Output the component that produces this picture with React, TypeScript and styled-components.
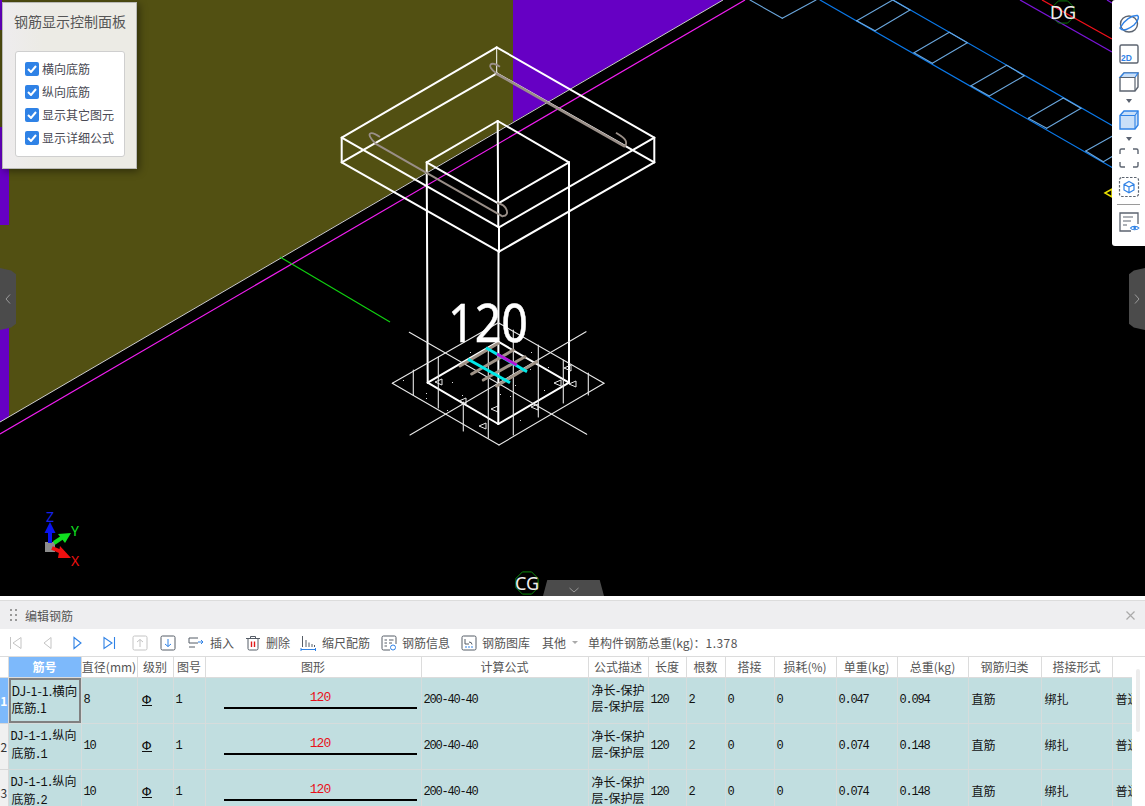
import React from 'react';
import styled, { createGlobalStyle } from 'styled-components';

const CJK = '"Noto Sans CJK SC", "Noto Sans", sans-serif';
const MONO = '"Liberation Mono", "Noto Sans CJK SC", monospace';

const GlobalStyle = createGlobalStyle`
  html, body { margin: 0; padding: 0; background: #fff; overflow: hidden; }
  * { box-sizing: border-box; }
`;

/* ---------- page ---------- */

const Page = styled.div`
  width: 1145px;
  height: 806px;
  display: flex;
  flex-direction: column;
  overflow: hidden;
  font-family: ${CJK};
`;

const Viewport = styled.div`
  position: relative;
  height: 596px;
  flex: none;
  background: #000;
  overflow: hidden;
`;

const Scene = styled.svg`
  display: block;
  width: 1145px;
  height: 596px;
`;

/* ---------- floating control panel ---------- */

const ControlPanel = styled.div`
  position: absolute;
  left: 2px;
  top: 2px;
  width: 135px;
  height: 167px;
  padding: 8px 11px 0 12px;
  background: linear-gradient(90deg, #eeecee 0%, #ecebe5 30%, #ecebe5 100%);
  border: 1px solid #b9b9b6;
  box-shadow: 2px 2px 8px rgba(0, 0, 0, 0.45);
`;

const PanelTitle = styled.div`
  font-size: 14px;
  line-height: 20px;
  color: #555;
  white-space: nowrap;
  margin-left: -1px;
`;

const OptionBox = styled.div`
  margin-top: 20px;
  width: 110px;
  height: 106px;
  padding: 10px 0 0 9px;
  background: #fff;
  border: 1px solid #cfcfcf;
  border-radius: 3px;
  display: flex;
  flex-direction: column;
  gap: 9px;
`;

const OptionRow = styled.label`
  display: flex;
  align-items: center;
  gap: 3px;
  height: 14px;
  font-size: 12px;
  line-height: 14px;
  color: #4a4a55;
  white-space: nowrap;
`;

const CheckMark = styled.span`
  width: 14px;
  height: 14px;
  border-radius: 2px;
  background: #2f82e6;
  display: flex;
  align-items: center;
  justify-content: center;
`;

/* ---------- right tools ---------- */

const ViewTools = styled.div`
  position: absolute;
  right: 0;
  top: 0;
  width: 33px;
  height: 246px;
  background: #fff;
  border-radius: 3px 0 0 3px;
  display: flex;
  flex-direction: column;
  align-items: center;
  padding-top: 13px;
`;

const ViewIcon = styled.svg<{ $gap?: number }>`
  display: block;
  width: 22px;
  height: 22px;
  flex: none;
  margin-bottom: ${p => p.$gap ?? 0}px;
`;

const DropArrow = styled.div`
  width: 0;
  height: 0;
  border-left: 3.5px solid transparent;
  border-right: 3.5px solid transparent;
  border-top: 4px solid #5a6270;
  margin: 6px 0 6px;
`;

const ToolDivider = styled.div`
  width: 23px;
  height: 1px;
  background: #9a9a9a;
  margin: 6px 0 6px;
`;

/* ---------- collapse handles ---------- */

const SideHandle = styled.div<{ $side: 'left' | 'right' }>`
  position: absolute;
  top: 268px;
  ${p => p.$side}: 0;
  width: 16px;
  height: 62px;
  background: #4b4b4b;
  clip-path: ${p =>
    p.$side === 'left'
      ? 'polygon(0 0, 70% 4%, 100% 10%, 100% 90%, 70% 96%, 0 100%)'
      : 'polygon(100% 0, 30% 4%, 0 10%, 0 90%, 30% 96%, 100% 100%)'};
  display: flex;
  align-items: center;
  justify-content: center;
  color: #9a9a9a;
`;

const BottomHandle = styled.div`
  position: absolute;
  left: 543px;
  bottom: 0;
  width: 61px;
  height: 16px;
  background: #4b4b4b;
  clip-path: polygon(7% 0, 93% 0, 100% 100%, 0 100%);
  display: flex;
  align-items: center;
  justify-content: center;
  color: #9a9a9a;
  padding-top: 3px;
`;

/* ---------- bottom panel ---------- */

const EditorPanel = styled.div`
  flex: 1;
  min-height: 0;
  display: flex;
  flex-direction: column;
  padding-top: 4px;
  background: #fff;
`;

const TitleBar = styled.div`
  height: 29px;
  flex: none;
  display: flex;
  align-items: center;
  padding: 0 10px 0 10px;
  background: #eeeef0;
  border-top: 1px solid #dcdcdc;
  font-size: 12px;
  color: #555;
`;

const Grip = styled.div`
  width: 7px;
  display: grid;
  grid-template-columns: 2px 2px;
  gap: 3px 3px;
  margin-right: 8px;
  i {
    width: 2px;
    height: 2px;
    background: #999;
  }
`;

const CloseButton = styled.div`
  margin-left: auto;
  color: #aaa;
  display: flex;
`;

const Toolbar = styled.div`
  height: 27px;
  flex: none;
  display: flex;
  align-items: center;
  padding-left: 8px;
  font-size: 12px;
  color: #555;
  white-space: nowrap;
`;

const ToolIcon = styled.svg<{ $left: number }>`
  display: block;
  width: 16px;
  height: 16px;
  flex: none;
  margin-left: ${p => p.$left}px;
`;

const ToolLabel = styled.span<{ $left?: number }>`
  margin-left: ${p => p.$left ?? 5}px;
`;

const SmallCaret = styled.span`
  width: 0;
  height: 0;
  margin-left: 6px;
  border-left: 3px solid transparent;
  border-right: 3px solid transparent;
  border-top: 3px solid #aaa;
`;

const TotalValue = styled.span`
  letter-spacing: 0.5px;
`;

const TableArea = styled.div`
  flex: 1;
  min-height: 0;
  display: flex;
  border-top: 1px solid #dcdcdc;
`;

const TableClip = styled.div`
  width: 1132px;
  flex: none;
  overflow: hidden;
`;

const ScrollTrack = styled.div`
  flex: 1;
  padding: 12px 0 0 4px;
`;

const ScrollThumb = styled.div`
  width: 4px;
  height: 63px;
  background: #ececec;
  border-radius: 2px;
`;

const Grid = styled.table`
  width: 1232px;
  table-layout: fixed;
  border-collapse: collapse;
`;

const HeadCell = styled.th<{ $active?: boolean }>`
  height: 20px;
  padding: 0;
  font-size: 12px;
  font-weight: ${p => (p.$active ? 700 : 400)};
  line-height: 14px;
  color: ${p => (p.$active ? '#fff' : '#555')};
  background: ${p => (p.$active ? '#7db9fb' : '#fff')};
  border-right: 1px solid #dcdcdc;
  border-bottom: 1px solid #dcdcdc;
  text-align: center;
  white-space: nowrap;
  overflow: hidden;
`;

const BlankHead = styled.th`
  height: 20px;
  padding: 0;
  background: #fff;
  border-bottom: 1px solid #dcdcdc;
`;

const RowHead = styled.td<{ $active?: boolean }>`
  padding: 0;
  height: 46px;
  font-size: 12px;
  text-align: center;
  font-weight: ${p => (p.$active ? 700 : 400)};
  color: ${p => (p.$active ? '#fff' : '#333')};
  background: ${p => (p.$active ? '#7db9fb' : '#f0f0f0')};
  border-right: 1px solid #d8d8d8;
  border-bottom: 1px solid #d8d8d8;
`;

const Cell = styled.td`
  padding: 0 0 2px 3px;
  height: 46px;
  font-size: 12px;
  line-height: 14px;
  color: #111;
  background: #c1dee0;
  border-right: 1px solid #d6dcdc;
  border-bottom: 1px solid #d6dcdc;
  white-space: nowrap;
  overflow: hidden;
`;

const CodeCell = styled(Cell)<{ $active?: boolean }>`
  line-height: ${p => (p.$active ? 17 : 15)}px;
  font-size: ${p => (p.$active ? 12.5 : 12)}px;
  box-shadow: ${p => (p.$active ? 'inset 0 0 0 2px #808080' : 'none')};
`;

const Mono = styled.span`
  font-family: ${MONO};
  letter-spacing: -1.2px;
  margin-left: -1px;
`;

const TextLine = styled.span`
  display: block;
`;

const GradeMark = styled.span`
  display: inline-block;
  margin-left: 1px;
  font-family: "DejaVu Sans", sans-serif;
  font-size: 13px;
  line-height: 11px;
  border-bottom: 1px solid #111;
`;

const ShapeCell = styled(Cell)`
  padding: 0 0 0 18px;
`;

const ShapeLength = styled.div`
  width: 193px;
  text-align: center;
  color: #e8101a;
  font-family: ${MONO};
  font-size: 13px;
  letter-spacing: -1px;
`;

const ShapeBar = styled.div`
  width: 193px;
  height: 2px;
  margin-top: 2px;
  background: #000;
`;

/* ---------- data ---------- */

const columns = [
  { title: '', width: 8 },
  { title: '筋号', width: 73 },
  { title: '直径(mm)', width: 56 },
  { title: '级别', width: 36 },
  { title: '图号', width: 32 },
  { title: '图形', width: 216 },
  { title: '计算公式', width: 167 },
  { title: '公式描述', width: 60 },
  { title: '长度', width: 38 },
  { title: '根数', width: 39 },
  { title: '搭接', width: 49 },
  { title: '损耗(%)', width: 62 },
  { title: '单重(kg)', width: 61 },
  { title: '总重(kg)', width: 71 },
  { title: '钢筋归类', width: 73 },
  { title: '搭接形式', width: 71 },
  { title: '', width: 120 },
];

const rows = [
  { no: 1, prefix: 'DJ-1-1.', part: '横向', tail: '.1', dia: 8, single: '0.047', total: '0.094' },
  { no: 2, prefix: 'DJ-1-1.', part: '纵向', tail: '.1', dia: 10, single: '0.074', total: '0.148' },
  { no: 3, prefix: 'DJ-1-1.', part: '纵向', tail: '.2', dia: 10, single: '0.074', total: '0.148' },
];

const options = ['横向底筋', '纵向底筋', '显示其它图元', '显示详细公式'];

type Seg = [number, number, number, number];

const footing: Seg[] = [
  [496.7, 47.3, 654.3, 137.7], [654.3, 137.7, 499, 227.3], [499, 227.3, 341.7, 137.7], [341.7, 137.7, 496.7, 47.3],
  [496.7, 73.3, 654.3, 162.3], [654.3, 162.3, 499, 251.7], [499, 251.7, 341.7, 162.3], [341.7, 162.3, 496.7, 73.3],
  [341.7, 137.7, 341.7, 162.3], [654.3, 137.7, 654.3, 162.3], [499, 227.3, 499, 251.7],
  [497.7, 121, 569, 162.3], [569, 162.3, 498.3, 203.3], [498.3, 203.3, 426.7, 162.3], [426.7, 162.3, 497.7, 121],
  [497.7, 121, 498.3, 227], [426.7, 162.3, 427.7, 382.7], [569, 162.3, 569, 382.7], [498.5, 251.7, 498.3, 424],
  [427.7, 382.7, 498.3, 424], [498.3, 424, 569, 382.7], [569, 382.7, 498.3, 341.7], [498.3, 341.7, 427.7, 382.7],
];

const plate: Seg[] = [
  [392.3, 383.3, 498.3, 322.7], [498.3, 322.7, 604, 383.3], [604, 383.3, 499, 445], [499, 445, 392.3, 383.3],
  [409.3, 332.3, 586.7, 434.3], [586, 331.7, 410, 435],
  [413.3, 370, 413.3, 395], [438.3, 357, 438.3, 408], [463.3, 402, 463.3, 431], [488.3, 349, 488.3, 438],
  [513.3, 330, 513.3, 435], [538.3, 345, 538.3, 417], [563.3, 360, 563.3, 403], [588.3, 373, 588.3, 395],
];

const blueLines: Seg[] = [[820, 0, 1113, 168], [893, 0, 1113, 126]];
const paleLines: Seg[] = [
  [750, 0, 782.3, 18.3], [782.3, 18.3, 816, 0],
  [856.7, 20.7, 892.7, 0], [875, 30.7, 910, 10],
  [914, 52.7, 949.3, 32.3], [932.3, 63.3, 967.3, 42.7],
  [971, 85.7, 1006.7, 65.3], [989.3, 96, 1024.3, 75.7],
  [1028.3, 118.3, 1063.3, 98], [1046.7, 128.3, 1081, 108.3],
  [1085.7, 151, 1113, 135.7], [1103.3, 161.7, 1113, 156],
  [892.7, 0, 910, 10], [949.3, 32.3, 967.3, 42.7], [1006.7, 65.3, 1024.3, 75.7], [1063.3, 98, 1081, 108.3],
  [856.7, 20.7, 875, 30.7], [914, 52.7, 932.3, 63.3], [971, 85.7, 989.3, 96], [1028.3, 118.3, 1046.7, 128.3], [1085.7, 151, 1103.3, 161.7],
];

const rebarGrey: Seg[] = [
  [460, 366, 498.3, 343.3], [471.7, 374, 513.3, 350], [483.3, 380, 525, 356.7], [496.7, 386, 536.7, 361.7],
];

const triangles: [number, number][] = [
  [439, 382], [463, 401], [495, 409], [535, 407], [483, 426], [558, 383], [573, 384], [568, 368],
];

const specks: [number, number][] = [
  [403, 380], [452, 382], [426, 393], [447, 410], [500, 394], [510, 396], [530, 369], [548, 367],
  [462, 395], [520, 420], [544, 390], [470, 352], [531, 352], [426, 398], [481, 414], [515, 385],
];

const hexagon = (cx: number, cy: number, r: number) =>
  Array.from({ length: 8 }, (_, i) => {
    const a = (Math.PI / 4) * i + Math.PI / 8;
    return `${cx + r * Math.cos(a)},${cy + r * Math.sin(a)}`;
  }).join(' ');

const Lines = ({ items, color, width }: { items: Seg[]; color: string; width: number }) => (
  <g stroke={color} strokeWidth={width} fill="none" strokeLinecap="round">
    {items.map((s, i) => (
      <line key={i} x1={s[0]} y1={s[1]} x2={s[2]} y2={s[3]} />
    ))}
  </g>
);

const CadScene = () => (
  <Scene viewBox="0 0 1145 596">
    {/* slabs behind the column */}
    <polygon points="0,0 513,0 513,122 0,422" fill="#525012" />
    <polygon points="513,0 723,0 513,122" fill="#6600c4" />
    <rect x="0" y="0" width="2" height="30" fill="#6600c4" />
    <rect x="0" y="127" width="9" height="98" fill="#6600c4" />
    <polygon points="0,327 9,327 9,417 0,422" fill="#6600c4" />
    <line x1="0" y1="422" x2="723" y2="0" stroke="#cfcfcf" strokeWidth="1" />
    <line x1="0" y1="434" x2="745" y2="0" stroke="#f01ef0" strokeWidth="1.2" />
    <line x1="280" y1="257" x2="390" y2="322" stroke="#10d010" strokeWidth="1.2" />

    {/* top right axis and stair */}
    <Lines items={blueLines} color="#0a78e8" width={1.2} />
    <Lines items={paleLines} color="#6aa6dc" width={1.1} />
    <line x1="1042" y1="0" x2="1112" y2="39" stroke="#f0101a" strokeWidth="1.3" />
    <line x1="1020" y1="0" x2="1112" y2="52" stroke="#7a14d8" strokeWidth="1.3" />
    <line x1="1107" y1="0" x2="1112" y2="3" stroke="#7a14d8" strokeWidth="1.3" />
    <polygon points={hexagon(1063, 12, 12)} fill="none" stroke="#0a7a0a" strokeWidth="1" />
    <text x="1063" y="18.5" textAnchor="middle" fontSize="18" fill="#eee" fontFamily="Noto Sans, sans-serif">DG</text>
    <polygon points="1105,193 1112,189 1112,197" fill="none" stroke="#e8e000" strokeWidth="1.5" />

    {/* footing wireframe */}
    <Lines items={footing} color="#fff" width={2} />
    <line x1="496.7" y1="47.3" x2="496.7" y2="73.3" stroke="#fff" strokeWidth="1" />
    <g stroke="#9a8f88" fill="none" strokeWidth="2.5">
      <line x1="495.7" y1="73.3" x2="625" y2="146.7" />
      <line x1="375" y1="143.3" x2="503" y2="216.7" strokeWidth="2" />
      <path d="M495.7 72.7C486 66 490 60 500 66.7" strokeWidth="1.8" />
      <path d="M625 146.7C629 140 622 137 616 132.7" strokeWidth="1.8" />
      <path d="M375 143C365 133 370 130 380 137" strokeWidth="1.8" />
      <path d="M503 216C510 216 508 205 497 203" strokeWidth="1.8" />
    </g>

    {/* base plate and bottom bars */}
    <Lines items={plate} color="#e8e8e8" width={1.1} />
    <Lines items={rebarGrey} color="#a09488" width={3} />
    <line x1="468" y1="359.3" x2="510" y2="382.7" stroke="#00e8e8" strokeWidth="3" />
    <line x1="486" y1="347.7" x2="527" y2="371.7" stroke="#00e8e8" strokeWidth="3" />
    <line x1="497" y1="354" x2="516.7" y2="365" stroke="#b414d8" strokeWidth="3" />
    <g fill="none" stroke="#e8e8e8" strokeWidth="1">
      {triangles.map(([x, y]) => (
        <polygon key={`${x}-${y}`} points={`${x - 4},${y} ${x + 3},${y - 3} ${x + 3},${y + 3}`} />
      ))}
    </g>
    <g fill="#ddd">
      {specks.map(([x, y]) => (
        <rect key={`${x}-${y}`} x={x} y={y} width="1" height="1" />
      ))}
    </g>
    <text x="488" y="342" textAnchor="middle" fontSize="52" fill="#fff" stroke="#fff" strokeWidth="0.5" fontFamily="Noto Sans, sans-serif" textLength="80" lengthAdjust="spacingAndGlyphs">120</text>

    {/* axis triad */}
    <rect x="45" y="542" width="10" height="10" fill="#8c8c8c" />
    <line x1="50" y1="543" x2="50" y2="530" stroke="#0a14f0" strokeWidth="4" />
    <polygon points="44.5,533 55.5,533 50,522" fill="#0a14f0" />
    <line x1="54" y1="543" x2="63" y2="537" stroke="#10e020" strokeWidth="4" />
    <polygon points="58,534 71,533 65,543" fill="#10e020" />
    <line x1="52" y1="548" x2="64" y2="553" stroke="#ee1010" strokeWidth="4" />
    <polygon points="60,546 71,558 58,558" fill="#ee1010" />
    <text x="50" y="522" textAnchor="middle" fontSize="14" fill="#1420e8" fontFamily="Noto Sans, sans-serif">Z</text>
    <text x="75" y="536" textAnchor="middle" fontSize="14" fill="#10e020" fontFamily="Noto Sans, sans-serif">Y</text>
    <text x="75" y="566" textAnchor="middle" fontSize="14" fill="#ee1010" fontFamily="Noto Sans, sans-serif">X</text>

    <polygon points={hexagon(527, 583, 12)} fill="none" stroke="#0a8a0a" strokeWidth="1" />
    <text x="527" y="590" textAnchor="middle" fontSize="18" fill="#eee" fontFamily="Noto Sans, sans-serif">CG</text>
  </Scene>
);

const ToolStack = () => (
  <ViewTools>
    <ViewIcon viewBox="0 0 22 22" $gap={8} fill="none">
      <ellipse cx="11" cy="11" rx="8.5" ry="8" stroke="#5c6470" strokeWidth="1.4" />
      <path d="M2 15C6 7 14 2 19.5 2.5C21.5 4 20 8 16 12C11 16 5 19 2 15Z" stroke="#2f82e6" strokeWidth="1.4" />
    </ViewIcon>
    <ViewIcon viewBox="0 0 22 22" $gap={6} fill="none">
      <rect x="2" y="2" width="18" height="18" rx="1.5" stroke="#5c6470" strokeWidth="1.4" />
      <text x="8.5" y="17.5" textAnchor="middle" fontSize="8.5" fontWeight="700" fill="#2f82e6" fontFamily="Liberation Sans, sans-serif">2D</text>
    </ViewIcon>
    <ViewIcon viewBox="0 0 22 22" fill="none">
      <path d="M2 6.5L6 2H20V16L17 20H2Z" stroke="#5c6470" strokeWidth="1.4" />
      <path d="M2 6.5L6 2H20L17 6.5Z" fill="#c9dff8" stroke="#2f82e6" strokeWidth="1.2" />
      <path d="M17 6.5V20M17 6.5H2" stroke="#5c6470" strokeWidth="1.2" />
    </ViewIcon>
    <DropArrow />
    <ViewIcon viewBox="0 0 22 22" fill="none">
      <path d="M2 6.5L6 2H20V16L17 20H2Z" fill="#c9dff8" stroke="#2f82e6" strokeWidth="1.4" />
      <path d="M17 6.5V20M17 6.5H2M17 6.5L20 2" stroke="#2f82e6" strokeWidth="1.1" />
    </ViewIcon>
    <DropArrow />
    <ViewIcon viewBox="0 0 22 22" $gap={7} fill="none">
      <path d="M2 7V3.5Q2 2 3.5 2H7M15 2H18.5Q20 2 20 3.5V7M20 15V18.5Q20 20 18.5 20H15M7 20H3.5Q2 20 2 18.5V15" stroke="#5c6470" strokeWidth="1.4" />
    </ViewIcon>
    <ViewIcon viewBox="0 0 22 22" fill="none">
      <rect x="1.5" y="1.5" width="19" height="19" rx="2.5" stroke="#5c6470" strokeWidth="1.2" strokeDasharray="2.5 1.5" />
      <path d="M11 5.5L16 8.3V13.9L11 16.7L6 13.9V8.3ZM6 8.3L11 11.1L16 8.3M11 11.1V16.7" stroke="#2f82e6" strokeWidth="1.2" />
    </ViewIcon>
    <ToolDivider />
    <ViewIcon viewBox="0 0 22 22" fill="none">
      <path d="M13 20H2V2H20V13" stroke="#5c6470" strokeWidth="1.3" />
      <path d="M5 6H15M5 10H13M5 14H9" stroke="#5c6470" strokeWidth="1.1" />
      <path d="M12.5 17C14 14.8 19 14.8 21 17C19 19.4 14 19.4 12.5 17Z" stroke="#2f82e6" strokeWidth="1.1" />
      <circle cx="16.7" cy="17" r="1.3" fill="#2f82e6" />
    </ViewIcon>
  </ViewTools>
);

const ActionBar = () => (
  <Toolbar>
    <ToolIcon $left={0} viewBox="0 0 16 16" fill="none" stroke="#c4c4c4" strokeWidth="1">
      <path d="M2.5 2V14M13 2.5V13.5L5 8Z" />
    </ToolIcon>
    <ToolIcon $left={15} viewBox="0 0 16 16" fill="none" stroke="#c4c4c4" strokeWidth="1">
      <path d="M12 2.5V13.5L5 8Z" />
    </ToolIcon>
    <ToolIcon $left={15} viewBox="0 0 16 16" fill="none" stroke="#2f82e6" strokeWidth="1.1">
      <path d="M4 2.5V13.5L11 8Z" />
    </ToolIcon>
    <ToolIcon $left={15} viewBox="0 0 16 16" fill="none" stroke="#2f82e6" strokeWidth="1.1">
      <path d="M13.5 2V14M3 2.5V13.5L11 8Z" />
    </ToolIcon>
    <ToolIcon $left={15} viewBox="0 0 16 16" fill="none" stroke="#c4c4c4" strokeWidth="1">
      <rect x="1" y="1" width="14" height="14" rx="1.5" />
      <path d="M8 12V4.5M5 7L8 4.5L11 7" />
    </ToolIcon>
    <ToolIcon $left={12} viewBox="0 0 16 16" fill="none" stroke="#555c66" strokeWidth="1">
      <rect x="1" y="1" width="14" height="14" rx="1.5" />
      <path d="M8 4V11.5" stroke="#2f82e6" />
      <path d="M5 9L8 11.5L11 9" stroke="#2f82e6" />
    </ToolIcon>
    <ToolIcon $left={12} viewBox="0 0 16 16" fill="none" stroke="#555c66" strokeWidth="1">
      <path d="M10 3H1V8H10M1 12H7" />
      <path d="M10 7H15M13 5L15 7L13 9" stroke="#2f82e6" />
    </ToolIcon>
    <ToolLabel $left={6}>插入</ToolLabel>
    <ToolIcon $left={11} viewBox="0 0 16 16" fill="none" stroke="#555c66" strokeWidth="1">
      <path d="M1 3.5H15M5.5 3.5V1.5H10.5V3.5M3 3.5V13.5Q3 15 4.5 15H11.5Q13 15 13 13.5V3.5" />
      <path d="M6.5 6.5V12M9.5 6.5V12" stroke="#e01a1a" strokeWidth="1.4" />
    </ToolIcon>
    <ToolLabel>删除</ToolLabel>
    <ToolIcon $left={10} viewBox="0 0 16 16" fill="none" stroke="#555c66" strokeWidth="1">
      <path d="M2.5 1V12M6 5V12M9 7.5V12M12 9V12M14.5 10V12" />
      <path d="M1 14.5H15.5M1 13V16M15.5 13V16" stroke="#2f82e6" />
    </ToolIcon>
    <ToolLabel $left={6}>缩尺配筋</ToolLabel>
    <ToolIcon $left={11} viewBox="0 0 16 16" fill="none" stroke="#555c66" strokeWidth="1">
      <path d="M9 15H2.5Q1 15 1 13.5V2.5Q1 1 2.5 1H13.5Q15 1 15 2.5V9" />
      <path d="M3.5 5H6M8 5H12.5M3.5 8H6M8 8H11M3.5 11H6" />
      <circle cx="12" cy="12.5" r="2.5" stroke="#2f82e6" />
    </ToolIcon>
    <ToolLabel>钢筋信息</ToolLabel>
    <ToolIcon $left={11} viewBox="0 0 16 16" fill="none" stroke="#555c66" strokeWidth="1">
      <rect x="1" y="1" width="14" height="14" rx="1.5" />
      <path d="M4 4V9H8M8 7Q11 7 11 9.5" />
      <path d="M4 12H12" stroke="#2f82e6" strokeDasharray="2 1" />
    </ToolIcon>
    <ToolLabel>钢筋图库</ToolLabel>
    <ToolLabel $left={12}>其他</ToolLabel>
    <SmallCaret />
    <ToolLabel $left={10}>单构件钢筋总重(kg)：<TotalValue>1.378</TotalValue></ToolLabel>
  </Toolbar>
);

const RebarTable = () => (
  <Grid>
    <colgroup>
      {columns.map((c, i) => (
        <col key={i} width={c.width} />
      ))}
    </colgroup>
    <thead>
      <tr>
        {columns.map((c, i) =>
          i === 16 ? <BlankHead key={i} /> : <HeadCell key={i} $active={i === 1}>{c.title}</HeadCell>,
        )}
      </tr>
    </thead>
    <tbody>
      {rows.map(r => {
        const active = r.no === 1;
        return (
          <tr key={r.no}>
            <RowHead $active={active}>{r.no}</RowHead>
            <CodeCell $active={active}>
              {active ? (
                <>
                  <TextLine>{r.prefix}{r.part}</TextLine>
                  <TextLine>底筋{r.tail}</TextLine>
                </>
              ) : (
                <>
                  <TextLine><Mono>{r.prefix}</Mono>{r.part}</TextLine>
                  <TextLine>底筋<Mono>{r.tail}</Mono></TextLine>
                </>
              )}
            </CodeCell>
            <Cell><Mono>{r.dia}</Mono></Cell>
            <Cell><GradeMark>Φ</GradeMark></Cell>
            <Cell><Mono>1</Mono></Cell>
            <ShapeCell>
              <ShapeLength>120</ShapeLength>
              <ShapeBar />
            </ShapeCell>
            <Cell><Mono>200-40-40</Mono></Cell>
            <Cell>
              <TextLine>净长<Mono>-</Mono>保护</TextLine>
              <TextLine>层<Mono>-</Mono>保护层</TextLine>
            </Cell>
            <Cell><Mono>120</Mono></Cell>
            <Cell><Mono>2</Mono></Cell>
            <Cell><Mono>0</Mono></Cell>
            <Cell><Mono>0</Mono></Cell>
            <Cell><Mono>{r.single}</Mono></Cell>
            <Cell><Mono>{r.total}</Mono></Cell>
            <Cell>直筋</Cell>
            <Cell>绑扎</Cell>
            <Cell>普通钢筋</Cell>
          </tr>
        );
      })}
    </tbody>
  </Grid>
);

const App = () => (
  <Page>
    <GlobalStyle />
    <Viewport>
      <CadScene />
      <ControlPanel>
        <PanelTitle>钢筋显示控制面板</PanelTitle>
        <OptionBox>
          {options.map(o => (
            <OptionRow key={o}>
              <CheckMark>
                <svg width="10" height="8" viewBox="0 0 10 8" fill="none">
                  <path d="M1 4L4 7L9 1" stroke="#fff" strokeWidth="2" />
                </svg>
              </CheckMark>
              {o}
            </OptionRow>
          ))}
        </OptionBox>
      </ControlPanel>
      <ToolStack />
      <SideHandle $side="left">
        <svg width="6" height="10" viewBox="0 0 6 10" fill="none" stroke="currentColor">
          <path d="M5 0.5L1 5L5 9.5" />
        </svg>
      </SideHandle>
      <SideHandle $side="right">
        <svg width="6" height="10" viewBox="0 0 6 10" fill="none" stroke="currentColor">
          <path d="M1 0.5L5 5L1 9.5" />
        </svg>
      </SideHandle>
      <BottomHandle>
        <svg width="10" height="6" viewBox="0 0 10 6" fill="none" stroke="currentColor">
          <path d="M0.5 1L5 5L9.5 1" />
        </svg>
      </BottomHandle>
    </Viewport>
    <EditorPanel>
      <TitleBar>
        <Grip>
          {Array.from({ length: 6 }, (_, i) => <i key={i} />)}
        </Grip>
        编辑钢筋
        <CloseButton>
          <svg width="9" height="9" viewBox="0 0 9 9" fill="none" stroke="currentColor" strokeWidth="1.2">
            <path d="M0.5 0.5L8.5 8.5M8.5 0.5L0.5 8.5" />
          </svg>
        </CloseButton>
      </TitleBar>
      <ActionBar />
      <TableArea>
        <TableClip>
          <RebarTable />
        </TableClip>
        <ScrollTrack>
          <ScrollThumb />
        </ScrollTrack>
      </TableArea>
    </EditorPanel>
  </Page>
);

export default App;
